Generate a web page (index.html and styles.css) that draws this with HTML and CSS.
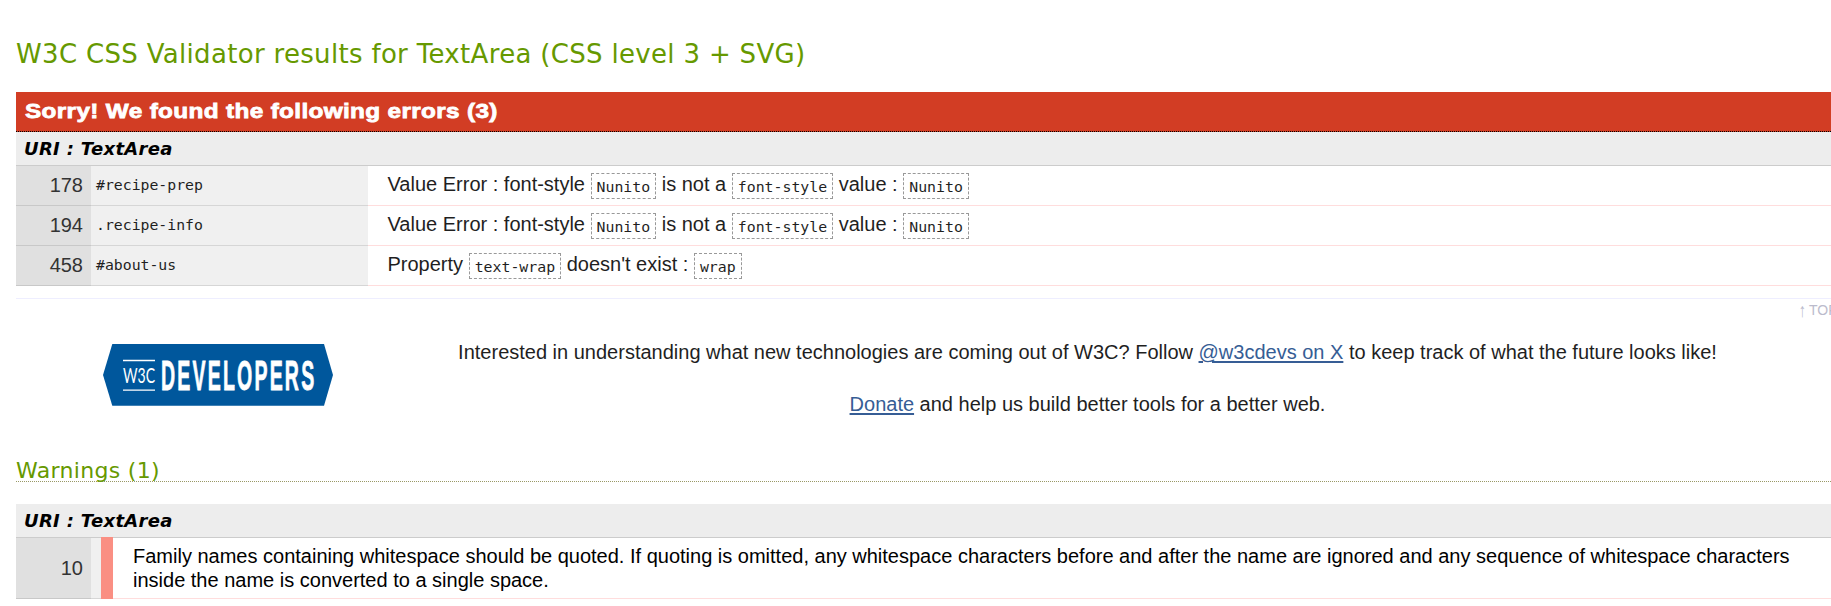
FILE: index.html
```html
<!DOCTYPE html>
<html lang="en">
<head>
<meta charset="utf-8">
<title>W3C CSS Validator results for TextArea</title>
<link rel="stylesheet" href="styles.css">
</head>
<body>
<main class="results">
  <h2 class="title">W3C CSS Validator results for TextArea (CSS level 3 + SVG)</h2>
  <section class="errors">
    <h3 class="banner"><span>Sorry! We found the following errors (3)</span></h3>
    <h4 class="uri">URI : TextArea</h4>
    <div class="row">
      <div class="line">178</div>
      <div class="context">#recipe-prep</div>
      <div class="message">Value Error : font-style <code>Nunito</code> is not a <code>font-style</code> value : <code>Nunito</code></div>
    </div>
    <div class="row">
      <div class="line">194</div>
      <div class="context">.recipe-info</div>
      <div class="message">Value Error : font-style <code>Nunito</code> is not a <code>font-style</code> value : <code>Nunito</code></div>
    </div>
    <div class="row">
      <div class="line">458</div>
      <div class="context">#about-us</div>
      <div class="message">Property <code>text-wrap</code> doesn't exist : <code>wrap</code></div>
    </div>
  </section>
  <div class="top"><span>↑</span>TOP</div>
  <section class="promo">
    <svg class="logo" width="230" height="62" viewBox="0 0 230 62">
      <path d="M9.3 0H221L230 31L221 61.7H9.3L0 31Z" fill="#00579c"/>
      <path d="M20 16.5H52M20 46.1H52" stroke="#fff" stroke-width="1.3"/>
      <text class="logo-w3c" x="20" y="38.6" textLength="32" lengthAdjust="spacingAndGlyphs">W3C</text>
      <text class="logo-dev" transform="translate(58 46.3) scale(.46 1)" x="0" y="0" textLength="333" lengthAdjust="spacing">DEVELOPERS</text>
    </svg>
    <div class="copy">
      <p class="follow">Interested in understanding what new technologies are coming out of W3C? Follow <a>@w3cdevs on X</a> to keep track of what the future looks like!</p>
      <p class="donate"><a>Donate</a> and help us build better tools for a better web.</p>
    </div>
  </section>
  <section class="warnings">
    <h3 class="subtitle">Warnings (1)</h3>
    <h4 class="uri">URI : TextArea</h4>
    <div class="row warning">
      <div class="line">10</div>
      <div class="gutter"></div>
      <div class="level"></div>
      <div class="message">Family names containing whitespace should be quoted. If quoting is omitted, any whitespace characters before and after the name are ignored and any sequence of whitespace characters<br>inside the name is converted to a single space.</div>
    </div>
  </section>
</main>
</body>
</html>
```

FILE: styles.css
```css
* { box-sizing: border-box; }
body {
  margin: 0;
  overflow: hidden;
  background: #fff;
  color: #1f1f1f;
  font: 20px/24px "Liberation Sans", Arial, sans-serif;
}
h2, h3, h4, p { margin: 0; font-weight: normal; }
.results { padding: 38px 0 0 16px; }
.title {
  height: 54px;
  color: #690;
  font: 26px/32px "DejaVu Sans", Verdana, sans-serif;
  letter-spacing: .32px;
  white-space: nowrap;
}
.banner {
  height: 40px;
  padding-left: 9px;
  border-bottom: 1px dotted #000;
  background: #d23d24;
  color: #fff;
  font-size: 21px;
  font-weight: bold;
  line-height: 38px;
  letter-spacing: .3px;
  -webkit-text-stroke: .8px #fff;
}
.banner span { display: inline-block; transform: scaleX(1.158); transform-origin: left; }
.uri {
  height: 34px;
  padding-left: 8px;
  border-bottom: 1px solid #ccc;
  background: #ededed;
  color: #000;
  font: italic bold 18px/33px "DejaVu Sans", Verdana, sans-serif;
  letter-spacing: .3px;
}
.row { display: grid; grid-template-columns: 75px 277px 1fr; grid-template-rows: 100%; height: 40px; }
.line {
  padding-right: 8px;
  border-bottom: 1px solid #c8c8c8;
  background: #e0e0e0;
  color: #333;
  line-height: 39px;
  text-align: right;
}
.context {
  padding-left: 5px;
  border-bottom: 1px solid #d6d6d6;
  background: #f0f0f0;
  font: 14.8px/37px "DejaVu Sans Mono", monospace;
}
.errors .message {
  padding-left: 19.5px;
  border-bottom: 1px solid #fdd;
  line-height: 37px;
  white-space: nowrap;
}
code {
  display: inline-block;
  height: 26px;
  padding: 0 5px;
  border: 1px dashed #999;
  font: 14.85px/26px "DejaVu Sans Mono", monospace;
  vertical-align: -1px;
}
.top {
  height: 46px;
  margin-top: 12px;
  padding: 4px 0 0 1783px;
  border-top: 1px solid #eef;
  color: #bbc;
  font-size: 14px;
  line-height: 14px;
  white-space: nowrap;
}
.top span { display: inline-block; width: 10px; transform: scaleY(1.4); }
.promo { display: flex; height: 108px; padding-left: 87px; }
.logo { flex: none; overflow: visible; }
.logo-w3c { fill: #fff; font: 21px "Lato", sans-serif; }
.logo-dev { fill: #fff; stroke: #fff; stroke-width: .8px; font: bold 42.5px "Liberation Sans", sans-serif; }
.copy { flex: none; width: 1509px; text-align: center; white-space: nowrap; }
.follow { margin: -4px 0 28px; }
.copy a { color: #365d95; text-decoration: underline; text-decoration-thickness: 2px; text-underline-offset: 2px; }
.subtitle {
  height: 30px;
  margin-bottom: 22px;
  border-bottom: 1px dotted #996;
  color: #690;
  font: 22px/38px "DejaVu Sans", Verdana, sans-serif;
  letter-spacing: .33px;
}
.row.warning { grid-template-columns: 75px 10px 12px 1fr; height: 61px; }
.warning .line { line-height: 60px; }
.gutter { border-bottom: 1px solid #d6d6d6; background: #f0f0f0; }
.level { margin-top: -1px; background: #fa8f83; }
.warning .message { padding: 6px 0 0 20px; border-bottom: 1px solid #fdd; color: #000; white-space: nowrap; }
```
